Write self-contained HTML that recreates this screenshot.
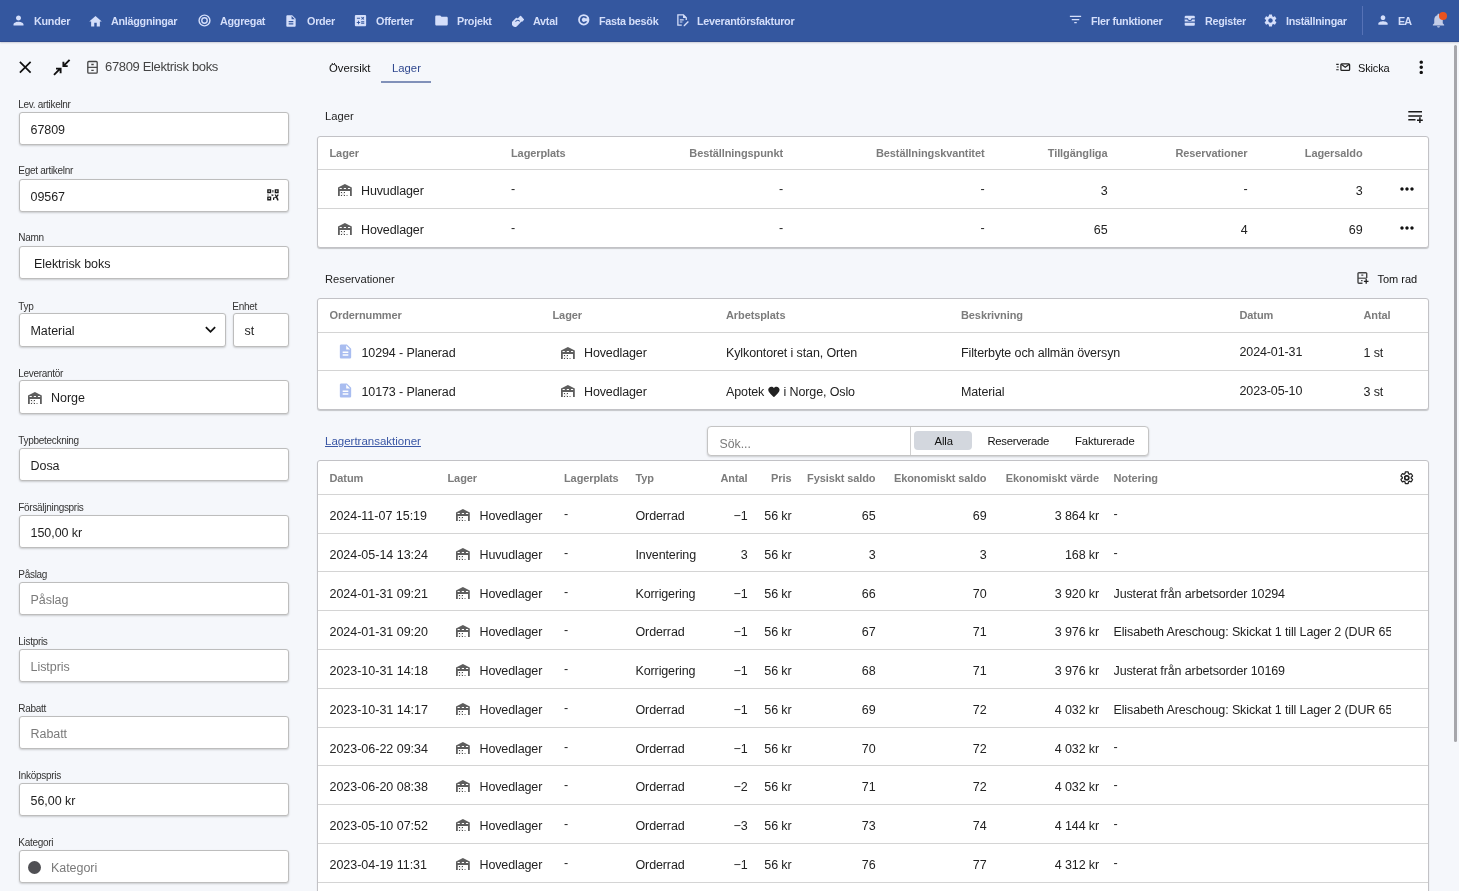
<!DOCTYPE html>
<html><head><meta charset="utf-8">
<style>
*{box-sizing:border-box;margin:0;padding:0}
html,body{width:1459px;height:891px;overflow:hidden;background:#f5f7fb;font-family:"Liberation Sans",sans-serif;color:#222;font-size:13px}
.abs{position:absolute}
#nav{position:absolute;left:0;top:0;width:1459px;height:42px;background:#34579f;box-shadow:inset 0 -1px 0 rgba(45,55,110,.32),0 1px 1.5px rgba(60,60,90,.22)}
#nav .t{position:absolute;top:14px;font-weight:bold;font-size:11.5px;line-height:14px;color:#d4defa;white-space:nowrap;letter-spacing:-.3px;transform:scaleX(.94);transform-origin:0 50%}
#nav svg{position:absolute;fill:#d4defa}
.lbl{position:absolute;left:18.300px;font-size:10px;line-height:12px;color:#333;white-space:nowrap;letter-spacing:-.3px}
.inp{position:absolute;left:19px;width:270px;height:33px;background:#fff;border:1px solid #bdbdbd;border-radius:3px;box-shadow:0 1px 2px rgba(0,0,0,.18);font-size:12.500px;letter-spacing:-.05px;line-height:35px;padding-left:10.500px;white-space:nowrap;color:#1e1e1e}
.inp.ph{color:#7a7a7a}
.card{position:absolute;left:317px;width:1112px;background:#fff;border:1px solid #c2c2c6;border-radius:3px;box-shadow:0 1px 1px rgba(0,0,0,.2);overflow:hidden}
.row{position:absolute;left:0;width:100%;border-top:1px solid #d4d4d4}
.c{position:absolute;white-space:nowrap;font-size:12.5px;letter-spacing:-.12px;line-height:16px;color:#222}
.h{position:absolute;white-space:nowrap;font-size:11px;line-height:14px;font-weight:bold;color:#7c7c7c;letter-spacing:-.1px}
.sec{position:absolute;left:325px;font-size:11.2px;line-height:14px;color:#222;white-space:nowrap}
svg{display:block}
#nav,#left,#main{will-change:transform}
#left,#main{position:absolute;left:0;top:0;width:1459px;height:891px;overflow:hidden}
</style></head><body>
<div id="nav"><svg class="abs" style="left:11px;top:13px;width:15px;height:15px;" viewBox="0 0 24 24"><path d="M12 12c2.21 0 4-1.79 4-4s-1.79-4-4-4-4 1.79-4 4 1.79 4 4 4zm0 2c-2.67 0-8 1.34-8 4v2h16v-2c0-2.66-5.33-4-8-4z"/></svg><span class="t" style="left:34px">Kunder</span><svg class="abs" style="left:88px;top:13.5px;width:15px;height:15px;" viewBox="0 0 24 24"><path d="M10 20v-6h4v6h5v-8h3L12 3 2 12h3v8z"/></svg><span class="t" style="left:111px">Anläggningar</span><svg class="abs" style="left:197.5px;top:14px;width:13px;height:13px" viewBox="0 0 24 24"><circle cx="12" cy="12" r="10" fill="none" stroke="#d4defa" stroke-width="2.6"/><circle cx="12" cy="12" r="5" fill="none" stroke="#d4defa" stroke-width="2.6"/></svg><span class="t" style="left:219.5px">Aggregat</span><svg class="abs" style="left:284px;top:13.5px;width:14px;height:14px;" viewBox="0 0 24 24"><path d="M14 2H6c-1.1 0-1.99.9-1.99 2L4 20c0 1.1.89 2 1.99 2H18c1.1 0 2-.9 2-2V8l-6-6zm2 16H8v-2h8v2zm0-4H8v-2h8v2zm-3-5V3.5L18.5 9H13z"/></svg><span class="t" style="left:306.5px">Order</span><svg class="abs" style="left:353px;top:13px;width:15px;height:15px;" viewBox="0 0 24 24"><path d="M19 3H5c-1.1 0-2 .9-2 2v14c0 1.1.9 2 2 2h14c1.1 0 2-.9 2-2V5c0-1.1-.9-2-2-2zm-5.97 4.06L14.09 6l1.41 1.41L16.91 6l1.06 1.06-1.41 1.41 1.41 1.41-1.06 1.06-1.41-1.4-1.41 1.41-1.06-1.06 1.41-1.41-1.41-1.42zm-6.78.66h5v1.5h-5v-1.5zM11.5 16h-2v2H8v-2H6v-1.5h2v-2h1.5v2h2V16zm6.5 1.25h-5v-1.5h5v1.5zm0-2.5h-5v-1.5h5v1.5z"/></svg><span class="t" style="left:376px">Offerter</span><svg class="abs" style="left:433.5px;top:13px;width:15px;height:15px;" viewBox="0 0 24 24"><path d="M10 4H4c-1.1 0-1.99.9-1.99 2L2 18c0 1.1.9 2 2 2h16c1.1 0 2-.9 2-2V8c0-1.1-.9-2-2-2h-8l-2-2z"/></svg><span class="t" style="left:456.5px">Projekt</span><svg class="abs" style="left:510.5px;top:13.5px;width:13.5px;height:13.5px" viewBox="0 0 24 24"><path d="M3 14.5L9.5 8l3 1.5L17 4.5l5 5.5-2.5 2.5-1-1L11 19.5 8.5 22 5.5 21.5 3 19z" stroke="#d4defa" stroke-width="2.5" stroke-linejoin="round"/><path d="M8 13.5c2.5-3 5-3 7.5-.5" fill="none" stroke="#34579f" stroke-width="1.8"/></svg><span class="t" style="left:532.5px">Avtal</span><svg class="abs" style="left:576.5px;top:13px;width:13.5px;height:13.5px" viewBox="0 0 24 24"><path d="M12 2a10 10 0 100 20 10 10 0 000-20zm0 3.2a6.8 6.8 0 016.3 4.2h-3.7a3.6 3.6 0 100 5.2h3.7A6.8 6.8 0 1112 5.2z" fill-rule="evenodd"/></svg><span class="t" style="left:598.5px">Fasta besök</span><svg class="abs" style="left:673.6px;top:12.4px;width:15.5px;height:16px" viewBox="0 0 24 24"><path d="M5 3h10l5 5v4h-2V9h-4V5H7v14h5v2H5zM9 11h6v1.6H9zm0 3.4h4V16H9zM21.5 13.5l1.5 1.5-6.5 6.5H15V20z"/></svg><span class="t" style="left:697px">Leverantörsfakturor</span><svg class="abs" style="left:1067.6px;top:12.4px;width:15px;height:15px;" viewBox="0 0 24 24"><path d="M10 18h4v-2h-4v2zM3 6v2h18V6H3zm3 7h12v-2H6v2z"/></svg><span class="t" style="left:1091px">Fler funktioner</span><svg class="abs" style="left:1182.5px;top:13.5px;width:13.5px;height:13.5px" viewBox="0 0 24 24"><path d="M3 5a2 2 0 012-2h14a2 2 0 012 2v8.5H3z"/><path d="M3 15.5h18V19a2 2 0 01-2 2H5a2 2 0 01-2-2z"/><path d="M2.500 8.500h5.500c.3 2 1.900 3.300 4 3.300s3.700-1.300 4-3.300h5.500" fill="none" stroke="#34579f" stroke-width="2.200"/></svg><span class="t" style="left:1205px">Register</span><svg class="abs" style="left:1262.5px;top:13px;width:15px;height:15px;" viewBox="0 0 24 24"><path d="M19.14 12.94c.04-.3.06-.61.06-.94 0-.32-.02-.64-.07-.94l2.03-1.58c.18-.14.23-.41.12-.61l-1.92-3.32c-.12-.22-.37-.29-.59-.22l-2.39.96c-.5-.38-1.03-.7-1.62-.94l-.36-2.54c-.04-.24-.24-.41-.48-.41h-3.84c-.24 0-.43.17-.47.41l-.36 2.54c-.59.24-1.13.57-1.62.94l-2.39-.96c-.22-.08-.47 0-.59.22L2.74 8.87c-.12.21-.08.47.12.61l2.03 1.58c-.05.3-.09.63-.09.94s.02.64.07.94l-2.03 1.58c-.18.14-.23.41-.12.61l1.92 3.32c.12.22.37.29.59.22l2.39-.96c.5.38 1.03.7 1.62.94l.36 2.54c.05.24.24.41.48.41h3.84c.24 0 .44-.17.47-.41l.36-2.54c.59-.24 1.13-.56 1.62-.94l2.39.96c.22.08.47 0 .59-.22l1.92-3.32c.12-.22.07-.47-.12-.61l-2.01-1.58zM12 15.6c-1.98 0-3.6-1.62-3.6-3.6s1.62-3.6 3.6-3.6 3.6 1.62 3.6 3.6-1.62 3.6-3.6 3.6z"/></svg><span class="t" style="left:1286px">Inställningar</span><div class="abs" style="left:1362px;top:6px;width:1px;height:29px;background:#5672b6"></div><svg class="abs" style="left:1376px;top:13px;width:14px;height:14px;" viewBox="0 0 24 24"><path d="M12 12c2.21 0 4-1.79 4-4s-1.79-4-4-4-4 1.79-4 4 1.79 4 4 4zm0 2c-2.67 0-8 1.34-8 4v2h16v-2c0-2.66-5.33-4-8-4z"/></svg><span class="t" style="left:1398px;letter-spacing:-.9px">EA</span><svg class="abs" style="left:1429.9px;top:12.4px;width:17px;height:17px;fill:#c3cde8;" viewBox="0 0 24 24"><path d="M12 22c1.1 0 2-.9 2-2h-4c0 1.1.89 2 2 2zm6-6v-5c0-3.07-1.64-5.64-4.5-6.32V4c0-.83-.67-1.5-1.5-1.5s-1.5.67-1.5 1.5v.68C7.63 5.36 6 7.92 6 11v5l-2 2v1h16v-1l-2-2z"/></svg><div class="abs" style="left:1439px;top:12.2px;width:8.2px;height:8.2px;border-radius:50%;background:#e9531f"></div></div>
<div id="left"><svg class="abs" style="left:15.3px;top:57px;width:20.5px;height:20.5px;fill:#111;" viewBox="0 0 24 24"><path d="M19 6.41L17.59 5 12 10.59 6.41 5 5 6.41 10.59 12 5 17.59 6.41 19 12 13.41 17.59 19 19 17.59 13.41 12z"/></svg><svg class="abs" style="left:52px;top:58px;width:20px;height:20px" viewBox="0 0 20 20" fill="none" stroke="#111" stroke-width="1.9"><path d="M17.6 1.9L11.6 7.9M11.4 3.8V8.1H15.7M2 16.8L8.4 10.4M4 10.6H8.6V15.2"/></svg><svg class="abs" style="left:86.3px;top:60px;width:13px;height:15px" viewBox="0 0 13 15"><rect x="1.8" y="1.5" width="9.4" height="11.7" rx="1" fill="none" stroke="#444" stroke-width="1.3"/><path d="M1.8 7.35h9.4" stroke="#444" stroke-width="1.2"/><path d="M5.3 4.5h2.4M5.3 10.4h2.4" stroke="#444" stroke-width="1.3"/></svg><span class="abs" style="left:105px;top:59px;font-size:13px;line-height:16px;color:#444;white-space:nowrap;letter-spacing:-.35px">67809 Elektrisk boks</span><span class="lbl" style="top:98.5px">Lev. artikelnr</span><div class="inp" style="top:112px;">67809</div><span class="lbl" style="top:164.9px">Eget artikelnr</span><div class="inp" style="top:179px;">09567</div><svg class="abs" style="left:266.5px;top:188.7px;width:12px;height:12px" viewBox="0 0 12 12" fill="#1a1a1a"><path d="M.2.2h4v4h-4zm1.35 1.35v1.3h1.3v-1.3zM7.7.2h4v4h-4zm1.35 1.35v1.3h1.3v-1.3zM.2 7.4h4v4h-4zm1.35 1.35v1.3h1.3v-1.3z" fill-rule="evenodd"/><path d="M5.4.9h1v2.700h-1zM.5 5.400h1v1h-1zM4.300 5.400h2v1.500h-1v-.5h-1zM7.600 5.400h1.200l2.600 4.600v1.400h-1.200zM10.400 5.400h1.100v1.200l-2 2.200-2.300.5v1.800h-1.200v-2.500l2.800-.6z"/></svg><span class="lbl" style="top:231.9px">Namn</span><div class="inp" style="top:246px;padding-left:14px;">Elektrisk boks</div><span class="lbl" style="top:300.5px">Typ</span><div class="inp" style="top:313px;height:34px;line-height:34.5px;width:207px">Material</div><svg class="abs" style="left:199.8px;top:318.8px;width:21px;height:21px;fill:#111;" viewBox="0 0 24 24"><path d="M7.41 8.59L12 13.17l4.59-4.58L18 10l-6 6-6-6 1.41-1.41z"/></svg><span class="lbl" style="top:300.5px;left:232.3px">Enhet</span><div class="inp" style="top:313px;height:34px;line-height:34.5px;left:233px;width:56px">st</div><span class="lbl" style="top:367.5px">Leverantör</span><div class="inp" style="top:381px;padding-left:31px;top:380px;height:34px;line-height:35.5px;">Norge</div><svg class="abs" style="left:27.70px;top:391.80px;width:14px;height:12px" viewBox="0 0 14 12"><path d="M0 3.500L6.900 0 13.800 3.500V6.900H12V12H13.800V6.900 12H12V6.900H1.800V12H0z" fill="#5e5e5e"/><path d="M12 6.900h1.800V12H12z" fill="#5e5e5e"/><path d="M1.600 4.100h2.200v.9H1.600zM5.800 4.100H8v.9H5.800zM9.950 4.100h2.200v.9h-2.200z" fill="#fff"/><rect x="3.200" y="8.300" width="3.600" height="3.400" fill="#888" opacity=".18"/><path d="M2.900 8h1v1h-1zM5.900 8h1v1h-1zM2.900 10.900h1v1h-1zM5.900 10.900h1v1h-1z" fill="#333"/><path d="M8.200 11.100h1.700v.7H8.200z" fill="#888"/></svg><span class="lbl" style="top:434.5px">Typbeteckning</span><div class="inp" style="top:448px;">Dosa</div><span class="lbl" style="top:501.5px">Försäljningspris</span><div class="inp" style="top:515px;">150,00 kr</div><span class="lbl" style="top:568.5px">Påslag</span><div class="inp ph" style="top:582px;">Påslag</div><span class="lbl" style="top:635.5px">Listpris</span><div class="inp ph" style="top:649px;">Listpris</div><span class="lbl" style="top:702.5px">Rabatt</span><div class="inp ph" style="top:716px;">Rabatt</div><span class="lbl" style="top:769.5px">Inköpspris</span><div class="inp" style="top:783px;">56,00 kr</div><span class="lbl" style="top:836.5px">Kategori</span><div class="inp ph" style="top:850px;padding-left:31px;">Kategori</div><div class="abs" style="left:28px;top:860.5px;width:13px;height:13px;border-radius:50%;background:#505054"></div></div>
<div id="main"><span class="abs" style="left:329px;top:61px;font-size:11.3px;line-height:14px;color:#111">Översikt</span><span class="abs" style="left:392px;top:61px;font-size:11.3px;line-height:14px;color:#30488f">Lager</span><div class="abs" style="left:381px;top:81px;width:50px;height:2px;background:rgba(52,76,142,.6)"></div><svg class="abs" style="left:1335px;top:62px;width:16px;height:10px" viewBox="0 0 16 10" fill="none" stroke="#222"><rect x="5.9" y="1.8" width="8.7" height="6.5" rx=".9" stroke-width="1.3"/><path d="M6.2 2.3l4.05 3 4.05-3" stroke-width="1.2"/><path d="M1.2 2.4h2.5M1.8 5h1.9M1.2 7.7h2.5" stroke-width="1.1"/></svg><span class="abs" style="left:1358px;top:61px;font-size:11px;line-height:14px;color:#111;letter-spacing:-.15px">Skicka</span><svg class="abs" style="left:1411.25px;top:57.35px;width:20.5px;height:20.5px;fill:#111;" viewBox="0 0 24 24"><path d="M12 8c1.1 0 2-.9 2-2s-.9-2-2-2-2 .9-2 2 .9 2 2 2zm0 2c-1.1 0-2 .9-2 2s.9 2 2 2 2-.9 2-2-.9-2-2-2zm0 6c-1.1 0-2 .9-2 2s.9 2 2 2 2-.9 2-2-.9-2-2-2z"/></svg><span class="sec" style="top:109px">Lager</span><svg class="abs" style="left:1405px;top:108px;width:20px;height:18px" viewBox="0 0 20 18" fill="none" stroke="#1a1a1a" stroke-width="1.500"><path d="M3.300 3.700H17M3.300 8.100H17M3.300 11.800H10.500M14.900 9.200V15.100M12 12.150H17.800"/></svg><div class="card" style="top:136px;height:112px"><span class="h" style="left:11.5px;top:8.6px;">Lager</span><span class="h" style="left:193px;top:8.6px;">Lagerplats</span><span class="h" style="right:645px;top:8.6px;">Beställningspunkt</span><span class="h" style="right:443.5px;top:8.6px;">Beställningskvantitet</span><span class="h" style="right:320.5px;top:8.6px;">Tillgängliga</span><span class="h" style="right:180.5px;top:8.6px;">Reservationer</span><span class="h" style="right:65.5px;top:8.6px;">Lagersaldo</span><div class="row" style="top:32.0px;height:40px"></div><svg class="abs" style="left:20.10px;top:47.00px;width:14px;height:12px" viewBox="0 0 14 12"><path d="M0 3.500L6.900 0 13.800 3.500V6.900H12V12H13.800V6.900 12H12V6.900H1.800V12H0z" fill="#5e5e5e"/><path d="M12 6.900h1.800V12H12z" fill="#5e5e5e"/><path d="M1.600 4.100h2.200v.9H1.600zM5.800 4.100H8v.9H5.800zM9.950 4.100h2.200v.9h-2.200z" fill="#fff"/><rect x="3.200" y="8.300" width="3.600" height="3.400" fill="#888" opacity=".18"/><path d="M2.900 8h1v1h-1zM5.900 8h1v1h-1zM2.900 10.900h1v1h-1zM5.900 10.900h1v1h-1z" fill="#333"/><path d="M8.200 11.100h1.700v.7H8.200z" fill="#888"/></svg><span class="c" style="left:43px;top:45.5px;">Huvudlager</span><span class="c" style="left:193px;top:43.5px;">-</span><span class="c" style="right:645px;top:43.5px;">-</span><span class="c" style="right:443.5px;top:43.5px;">-</span><span class="c" style="right:320.5px;top:45.5px;">3</span><span class="c" style="right:180.5px;top:43.5px;">-</span><span class="c" style="right:65.5px;top:45.5px;">3</span><svg class="abs" style="left:1079px;top:42.0px;width:20px;height:20px;fill:#111;" viewBox="0 0 24 24"><path d="M6 10c-1.1 0-2 .9-2 2s.9 2 2 2 2-.9 2-2-.9-2-2-2zm12 0c-1.1 0-2 .9-2 2s.9 2 2 2 2-.9 2-2-.9-2-2-2zm-6 0c-1.1 0-2 .9-2 2s.9 2 2 2 2-.9 2-2-.9-2-2-2z"/></svg><div class="row" style="top:71.2px;height:40px"></div><svg class="abs" style="left:20.10px;top:86.20px;width:14px;height:12px" viewBox="0 0 14 12"><path d="M0 3.500L6.900 0 13.800 3.500V6.900H12V12H13.800V6.900 12H12V6.900H1.800V12H0z" fill="#5e5e5e"/><path d="M12 6.900h1.800V12H12z" fill="#5e5e5e"/><path d="M1.600 4.100h2.200v.9H1.600zM5.800 4.100H8v.9H5.800zM9.950 4.100h2.200v.9h-2.200z" fill="#fff"/><rect x="3.200" y="8.300" width="3.600" height="3.400" fill="#888" opacity=".18"/><path d="M2.900 8h1v1h-1zM5.900 8h1v1h-1zM2.900 10.900h1v1h-1zM5.900 10.900h1v1h-1z" fill="#333"/><path d="M8.200 11.100h1.700v.7H8.200z" fill="#888"/></svg><span class="c" style="left:43px;top:84.7px;">Hovedlager</span><span class="c" style="left:193px;top:82.7px;">-</span><span class="c" style="right:645px;top:82.7px;">-</span><span class="c" style="right:443.5px;top:82.7px;">-</span><span class="c" style="right:320.5px;top:84.7px;">65</span><span class="c" style="right:180.5px;top:84.7px;">4</span><span class="c" style="right:65.5px;top:84.7px;">69</span><svg class="abs" style="left:1079px;top:81.2px;width:20px;height:20px;fill:#111;" viewBox="0 0 24 24"><path d="M6 10c-1.1 0-2 .9-2 2s.9 2 2 2 2-.9 2-2-.9-2-2-2zm12 0c-1.1 0-2 .9-2 2s.9 2 2 2 2-.9 2-2-.9-2-2-2zm-6 0c-1.1 0-2 .9-2 2s.9 2 2 2 2-.9 2-2-.9-2-2-2z"/></svg></div><span class="sec" style="top:272px">Reservationer</span><svg class="abs" style="left:1356px;top:271px;width:14px;height:14px" viewBox="0 0 14 14" fill="none" stroke="#444"><path d="M10.700 7V2.600a.9.900 0 00-.9-.9H2.900a.9.900 0 00-.9.900v8.700a.9.900 0 00.900.900H6.500" stroke-width="1.400"/><path d="M2 7.200H10.700" stroke-width="1.200"/><path d="M5.300 4.200H7.300M5 9.700H6.600" stroke-width="1.200"/><path d="M10.200 8.100V12.700M7.900 10.400H12.500" stroke="#222" stroke-width="1.300"/></svg><span class="abs" style="left:1377.500px;top:272px;font-size:11px;line-height:14px;color:#111;letter-spacing:0">Tom rad</span><div class="card" style="top:298px;height:111.5px"><span class="h" style="left:11.5px;top:9px;">Ordernummer</span><span class="h" style="left:234.5px;top:9px;">Lager</span><span class="h" style="left:408px;top:9px;">Arbetsplats</span><span class="h" style="left:643px;top:9px;">Beskrivning</span><span class="h" style="left:921.5px;top:9px;">Datum</span><span class="h" style="left:1045.5px;top:9px;">Antal</span><div class="row" style="top:33.0px;height:40px"></div><svg class="abs" style="left:18.5px;top:43.8px;width:17px;height:17px;fill:#a9bdf0;" viewBox="0 0 24 24"><path d="M14 2H6c-1.1 0-1.99.9-1.99 2L4 20c0 1.1.89 2 1.99 2H18c1.1 0 2-.9 2-2V8l-6-6zm2 16H8v-2h8v2zm0-4H8v-2h8v2zm-3-5V3.5L18.5 9H13z"/></svg><span class="c" style="left:43.5px;top:45.5px;">10294 - Planerad</span><svg class="abs" style="left:243.10px;top:47.50px;width:14px;height:12px" viewBox="0 0 14 12"><path d="M0 3.500L6.900 0 13.800 3.500V6.900H12V12H13.800V6.900 12H12V6.900H1.800V12H0z" fill="#5e5e5e"/><path d="M12 6.900h1.800V12H12z" fill="#5e5e5e"/><path d="M1.600 4.100h2.200v.9H1.600zM5.800 4.100H8v.9H5.800zM9.950 4.100h2.200v.9h-2.200z" fill="#fff"/><rect x="3.200" y="8.300" width="3.600" height="3.400" fill="#888" opacity=".18"/><path d="M2.900 8h1v1h-1zM5.900 8h1v1h-1zM2.900 10.900h1v1h-1zM5.900 10.900h1v1h-1z" fill="#333"/><path d="M8.200 11.100h1.700v.7H8.200z" fill="#888"/></svg><span class="c" style="left:266px;top:45.5px;">Hovedlager</span><span class="c" style="left:408px;top:45.5px;">Kylkontoret i stan, Orten</span><span class="c" style="left:643px;top:45.5px;">Filterbyte och allmän översyn</span><span class="c" style="left:921.5px;top:44.5px;">2024-01-31</span><span class="c" style="left:1045.5px;top:45.5px;">1 st</span><div class="row" style="top:71.2px;height:40px"></div><svg class="abs" style="left:18.5px;top:83.2px;width:17px;height:17px;fill:#a9bdf0;" viewBox="0 0 24 24"><path d="M14 2H6c-1.1 0-1.99.9-1.99 2L4 20c0 1.1.89 2 1.99 2H18c1.1 0 2-.9 2-2V8l-6-6zm2 16H8v-2h8v2zm0-4H8v-2h8v2zm-3-5V3.5L18.5 9H13z"/></svg><span class="c" style="left:43.5px;top:84.7px;">10173 - Planerad</span><svg class="abs" style="left:243.10px;top:85.70px;width:14px;height:12px" viewBox="0 0 14 12"><path d="M0 3.500L6.900 0 13.800 3.500V6.900H12V12H13.800V6.900 12H12V6.900H1.800V12H0z" fill="#5e5e5e"/><path d="M12 6.900h1.800V12H12z" fill="#5e5e5e"/><path d="M1.600 4.100h2.200v.9H1.600zM5.800 4.100H8v.9H5.800zM9.950 4.100h2.200v.9h-2.200z" fill="#fff"/><rect x="3.200" y="8.300" width="3.600" height="3.400" fill="#888" opacity=".18"/><path d="M2.900 8h1v1h-1zM5.900 8h1v1h-1zM2.900 10.900h1v1h-1zM5.900 10.900h1v1h-1z" fill="#333"/><path d="M8.200 11.100h1.700v.7H8.200z" fill="#888"/></svg><span class="c" style="left:266px;top:84.7px;">Hovedlager</span><span class="c" style="left:408px;top:84.7px;">Apotek <svg style="display:inline-block;width:13.800px;height:12.500px;vertical-align:-1.500px;margin:0 -.6px" viewBox="0 0 24 22"><path d="M12 21.350l-1.450-1.320C5.400 15.360 2 12.280 2 8.500 2 5.420 4.420 3 7.500 3c1.740 0 3.410.81 4.500 2.090C13.090 3.810 14.760 3 16.500 3 19.580 3 22 5.420 22 8.500c0 3.780-3.400 6.860-8.550 11.540L12 21.350z" fill="#222"/></svg> i Norge, Oslo</span><span class="c" style="left:643px;top:84.7px;">Material</span><span class="c" style="left:921.5px;top:83.7px;">2023-05-10</span><span class="c" style="left:1045.5px;top:84.7px;">3 st</span></div><span class="abs" style="left:325px;top:434px;font-size:11.500px;line-height:14px;color:#3a57a5;text-decoration:underline;white-space:nowrap">Lagertransaktioner</span><div class="abs" style="left:707px;top:426px;width:441.500px;height:29.500px;background:#fff;border:1px solid #c4c4c4;border-radius:4px;box-shadow:0 1px 2px rgba(0,0,0,.18)"></div><div class="abs" style="left:910px;top:427px;width:1px;height:28px;background:#d0d0d0"></div><span class="abs" style="left:719.500px;top:436px;font-size:12.300px;line-height:16px;color:#7a7a7a">Sök...</span><div class="abs" style="left:914px;top:431px;width:58px;height:19px;border-radius:4px;background:#d3d7de"></div><span class="abs" style="left:934.5px;top:434px;font-size:11.300px;line-height:14px;color:#111;white-space:nowrap;letter-spacing:-0.12px">Alla</span><span class="abs" style="left:987.5px;top:434px;font-size:11.300px;line-height:14px;color:#111;white-space:nowrap;letter-spacing:-0.3px">Reserverade</span><span class="abs" style="left:1075px;top:434px;font-size:11.300px;line-height:14px;color:#111;white-space:nowrap;letter-spacing:-0.12px">Fakturerade</span><div class="card" style="top:460px;height:460px"><span class="h" style="left:11.5px;top:10px;">Datum</span><span class="h" style="left:129.5px;top:10px;">Lager</span><span class="h" style="left:246px;top:10px;">Lagerplats</span><span class="h" style="left:317.5px;top:10px;">Typ</span><span class="h" style="right:680.5px;top:10px;">Antal</span><span class="h" style="right:636.5px;top:10px;">Pris</span><span class="h" style="right:552.5px;top:10px;">Fysiskt saldo</span><span class="h" style="right:441.5px;top:10px;">Ekonomiskt saldo</span><span class="h" style="right:329px;top:10px;">Ekonomiskt värde</span><span class="h" style="left:795.5px;top:10px;">Notering</span><svg class="abs" style="left:1080px;top:8px;width:17.500px;height:17.500px" viewBox="0 0 24 24"><path d="M19.14 12.94c.04-.3.06-.61.06-.94 0-.32-.02-.64-.07-.94l2.03-1.58c.18-.14.23-.41.12-.61l-1.92-3.32c-.12-.22-.37-.29-.59-.22l-2.39.96c-.5-.38-1.03-.7-1.62-.94l-.36-2.54c-.04-.24-.24-.41-.48-.41h-3.84c-.24 0-.43.17-.47.41l-.36 2.54c-.59.24-1.13.57-1.62.94l-2.39-.96c-.22-.08-.47 0-.59.22L2.74 8.87c-.12.21-.08.47.12.61l2.03 1.58c-.05.3-.09.63-.09.94s.02.64.07.94l-2.03 1.58c-.18.14-.23.41-.12.61l1.92 3.32c.12.22.37.29.59.22l2.39-.96c.5.38 1.03.7 1.62.94l.36 2.54c.05.24.24.41.48.41h3.84c.24 0 .44-.17.47-.41l.36-2.54c.59-.24 1.13-.56 1.62-.94l2.39.96c.22.08.47 0 .59-.22l1.92-3.32c.12-.22.07-.47-.12-.61l-2.01-1.58zM12 15.6c-1.98 0-3.6-1.62-3.6-3.6s1.62-3.6 3.6-3.6 3.6 1.62 3.6 3.6-1.62 3.6-3.6 3.6z" fill="none" stroke="#222" stroke-width="2" transform="translate(1.800 1.800) scale(.85)"/><circle cx="12" cy="12" r="2.600" fill="none" stroke="#222" stroke-width="1.800"/></svg><div class="row" style="top:32.9px;height:40px"></div><span class="c" style="left:11.5px;top:47px;letter-spacing:-.02px">2024-11-07 15:19</span><svg class="abs" style="left:137.70px;top:47.90px;width:14px;height:12px" viewBox="0 0 14 12"><path d="M0 3.500L6.900 0 13.800 3.500V6.900H12V12H13.800V6.900 12H12V6.900H1.800V12H0z" fill="#5e5e5e"/><path d="M12 6.900h1.800V12H12z" fill="#5e5e5e"/><path d="M1.600 4.100h2.200v.9H1.600zM5.800 4.100H8v.9H5.800zM9.950 4.100h2.200v.9h-2.200z" fill="#fff"/><rect x="3.200" y="8.300" width="3.600" height="3.400" fill="#888" opacity=".18"/><path d="M2.900 8h1v1h-1zM5.900 8h1v1h-1zM2.900 10.900h1v1h-1zM5.900 10.900h1v1h-1z" fill="#333"/><path d="M8.200 11.100h1.700v.7H8.200z" fill="#888"/></svg><span class="c" style="left:161.5px;top:47px;">Hovedlager</span><span class="c" style="left:246px;top:45px;">-</span><span class="c" style="left:317.5px;top:47px;">Orderrad</span><span class="c" style="right:680.5px;top:47px;">−1</span><span class="c" style="right:636.5px;top:47px;">56 kr</span><span class="c" style="right:552.5px;top:47px;">65</span><span class="c" style="right:441.5px;top:47px;">69</span><span class="c" style="right:329px;top:47px;">3 864 kr</span><span class="c" style="left:795.5px;top:45px;">-</span><div class="row" style="top:71.69px;height:40px"></div><span class="c" style="left:11.5px;top:86px;letter-spacing:-.02px">2024-05-14 13:24</span><svg class="abs" style="left:137.70px;top:86.90px;width:14px;height:12px" viewBox="0 0 14 12"><path d="M0 3.500L6.900 0 13.800 3.500V6.900H12V12H13.800V6.900 12H12V6.900H1.800V12H0z" fill="#5e5e5e"/><path d="M12 6.900h1.800V12H12z" fill="#5e5e5e"/><path d="M1.600 4.100h2.200v.9H1.600zM5.800 4.100H8v.9H5.800zM9.950 4.100h2.200v.9h-2.200z" fill="#fff"/><rect x="3.200" y="8.300" width="3.600" height="3.400" fill="#888" opacity=".18"/><path d="M2.900 8h1v1h-1zM5.900 8h1v1h-1zM2.900 10.900h1v1h-1zM5.900 10.900h1v1h-1z" fill="#333"/><path d="M8.200 11.100h1.700v.7H8.200z" fill="#888"/></svg><span class="c" style="left:161.5px;top:86px;">Huvudlager</span><span class="c" style="left:246px;top:84px;">-</span><span class="c" style="left:317.5px;top:86px;">Inventering</span><span class="c" style="right:680.5px;top:86px;">3</span><span class="c" style="right:636.5px;top:86px;">56 kr</span><span class="c" style="right:552.5px;top:86px;">3</span><span class="c" style="right:441.5px;top:86px;">3</span><span class="c" style="right:329px;top:86px;">168 kr</span><span class="c" style="left:795.5px;top:84px;">-</span><div class="row" style="top:110.47999999999999px;height:40px"></div><span class="c" style="left:11.5px;top:125px;letter-spacing:-.02px">2024-01-31 09:21</span><svg class="abs" style="left:137.70px;top:125.90px;width:14px;height:12px" viewBox="0 0 14 12"><path d="M0 3.500L6.900 0 13.800 3.500V6.900H12V12H13.800V6.900 12H12V6.900H1.800V12H0z" fill="#5e5e5e"/><path d="M12 6.900h1.800V12H12z" fill="#5e5e5e"/><path d="M1.600 4.100h2.200v.9H1.600zM5.800 4.100H8v.9H5.800zM9.950 4.100h2.200v.9h-2.200z" fill="#fff"/><rect x="3.200" y="8.300" width="3.600" height="3.400" fill="#888" opacity=".18"/><path d="M2.900 8h1v1h-1zM5.900 8h1v1h-1zM2.900 10.900h1v1h-1zM5.900 10.900h1v1h-1z" fill="#333"/><path d="M8.200 11.100h1.700v.7H8.200z" fill="#888"/></svg><span class="c" style="left:161.5px;top:125px;">Hovedlager</span><span class="c" style="left:246px;top:123px;">-</span><span class="c" style="left:317.5px;top:125px;">Korrigering</span><span class="c" style="right:680.5px;top:125px;">−1</span><span class="c" style="right:636.5px;top:125px;">56 kr</span><span class="c" style="right:552.5px;top:125px;">66</span><span class="c" style="right:441.5px;top:125px;">70</span><span class="c" style="right:329px;top:125px;">3 920 kr</span><span class="c" style="left:795.5px;top:125px;width:277px;overflow:hidden">Justerat från arbetsorder 10294</span><div class="row" style="top:149.27px;height:40px"></div><span class="c" style="left:11.5px;top:163px;letter-spacing:-.02px">2024-01-31 09:20</span><svg class="abs" style="left:137.70px;top:163.90px;width:14px;height:12px" viewBox="0 0 14 12"><path d="M0 3.500L6.900 0 13.800 3.500V6.900H12V12H13.800V6.900 12H12V6.900H1.800V12H0z" fill="#5e5e5e"/><path d="M12 6.900h1.800V12H12z" fill="#5e5e5e"/><path d="M1.600 4.100h2.200v.9H1.600zM5.800 4.100H8v.9H5.800zM9.950 4.100h2.200v.9h-2.200z" fill="#fff"/><rect x="3.200" y="8.300" width="3.600" height="3.400" fill="#888" opacity=".18"/><path d="M2.900 8h1v1h-1zM5.900 8h1v1h-1zM2.900 10.900h1v1h-1zM5.900 10.900h1v1h-1z" fill="#333"/><path d="M8.200 11.100h1.700v.7H8.200z" fill="#888"/></svg><span class="c" style="left:161.5px;top:163px;">Hovedlager</span><span class="c" style="left:246px;top:161px;">-</span><span class="c" style="left:317.5px;top:163px;">Orderrad</span><span class="c" style="right:680.5px;top:163px;">−1</span><span class="c" style="right:636.5px;top:163px;">56 kr</span><span class="c" style="right:552.5px;top:163px;">67</span><span class="c" style="right:441.5px;top:163px;">71</span><span class="c" style="right:329px;top:163px;">3 976 kr</span><span class="c" style="left:795.5px;top:163px;width:277px;overflow:hidden">Elisabeth Areschoug: Skickat 1 till Lager 2 (DUR 6567)</span><div class="row" style="top:188.06px;height:40px"></div><span class="c" style="left:11.5px;top:202px;letter-spacing:-.02px">2023-10-31 14:18</span><svg class="abs" style="left:137.70px;top:202.90px;width:14px;height:12px" viewBox="0 0 14 12"><path d="M0 3.500L6.900 0 13.800 3.500V6.900H12V12H13.800V6.900 12H12V6.900H1.800V12H0z" fill="#5e5e5e"/><path d="M12 6.900h1.800V12H12z" fill="#5e5e5e"/><path d="M1.600 4.100h2.200v.9H1.600zM5.800 4.100H8v.9H5.800zM9.950 4.100h2.200v.9h-2.200z" fill="#fff"/><rect x="3.200" y="8.300" width="3.600" height="3.400" fill="#888" opacity=".18"/><path d="M2.900 8h1v1h-1zM5.900 8h1v1h-1zM2.900 10.900h1v1h-1zM5.900 10.900h1v1h-1z" fill="#333"/><path d="M8.200 11.100h1.700v.7H8.200z" fill="#888"/></svg><span class="c" style="left:161.5px;top:202px;">Hovedlager</span><span class="c" style="left:246px;top:200px;">-</span><span class="c" style="left:317.5px;top:202px;">Korrigering</span><span class="c" style="right:680.5px;top:202px;">−1</span><span class="c" style="right:636.5px;top:202px;">56 kr</span><span class="c" style="right:552.5px;top:202px;">68</span><span class="c" style="right:441.5px;top:202px;">71</span><span class="c" style="right:329px;top:202px;">3 976 kr</span><span class="c" style="left:795.5px;top:202px;width:277px;overflow:hidden">Justerat från arbetsorder 10169</span><div class="row" style="top:226.85px;height:40px"></div><span class="c" style="left:11.5px;top:241px;letter-spacing:-.02px">2023-10-31 14:17</span><svg class="abs" style="left:137.70px;top:241.90px;width:14px;height:12px" viewBox="0 0 14 12"><path d="M0 3.500L6.900 0 13.800 3.500V6.900H12V12H13.800V6.900 12H12V6.900H1.800V12H0z" fill="#5e5e5e"/><path d="M12 6.900h1.800V12H12z" fill="#5e5e5e"/><path d="M1.600 4.100h2.200v.9H1.600zM5.800 4.100H8v.9H5.800zM9.950 4.100h2.200v.9h-2.200z" fill="#fff"/><rect x="3.200" y="8.300" width="3.600" height="3.400" fill="#888" opacity=".18"/><path d="M2.900 8h1v1h-1zM5.900 8h1v1h-1zM2.900 10.900h1v1h-1zM5.900 10.900h1v1h-1z" fill="#333"/><path d="M8.200 11.100h1.700v.7H8.200z" fill="#888"/></svg><span class="c" style="left:161.5px;top:241px;">Hovedlager</span><span class="c" style="left:246px;top:239px;">-</span><span class="c" style="left:317.5px;top:241px;">Orderrad</span><span class="c" style="right:680.5px;top:241px;">−1</span><span class="c" style="right:636.5px;top:241px;">56 kr</span><span class="c" style="right:552.5px;top:241px;">69</span><span class="c" style="right:441.5px;top:241px;">72</span><span class="c" style="right:329px;top:241px;">4 032 kr</span><span class="c" style="left:795.5px;top:241px;width:277px;overflow:hidden">Elisabeth Areschoug: Skickat 1 till Lager 2 (DUR 6567)</span><div class="row" style="top:265.64px;height:40px"></div><span class="c" style="left:11.5px;top:280px;letter-spacing:-.02px">2023-06-22 09:34</span><svg class="abs" style="left:137.70px;top:280.90px;width:14px;height:12px" viewBox="0 0 14 12"><path d="M0 3.500L6.900 0 13.800 3.500V6.900H12V12H13.800V6.900 12H12V6.900H1.800V12H0z" fill="#5e5e5e"/><path d="M12 6.900h1.800V12H12z" fill="#5e5e5e"/><path d="M1.600 4.100h2.200v.9H1.600zM5.800 4.100H8v.9H5.800zM9.950 4.100h2.200v.9h-2.200z" fill="#fff"/><rect x="3.200" y="8.300" width="3.600" height="3.400" fill="#888" opacity=".18"/><path d="M2.900 8h1v1h-1zM5.900 8h1v1h-1zM2.900 10.900h1v1h-1zM5.900 10.900h1v1h-1z" fill="#333"/><path d="M8.200 11.100h1.700v.7H8.200z" fill="#888"/></svg><span class="c" style="left:161.5px;top:280px;">Hovedlager</span><span class="c" style="left:246px;top:278px;">-</span><span class="c" style="left:317.5px;top:280px;">Orderrad</span><span class="c" style="right:680.5px;top:280px;">−1</span><span class="c" style="right:636.5px;top:280px;">56 kr</span><span class="c" style="right:552.5px;top:280px;">70</span><span class="c" style="right:441.5px;top:280px;">72</span><span class="c" style="right:329px;top:280px;">4 032 kr</span><span class="c" style="left:795.5px;top:278px;">-</span><div class="row" style="top:304.42999999999995px;height:40px"></div><span class="c" style="left:11.5px;top:318px;letter-spacing:-.02px">2023-06-20 08:38</span><svg class="abs" style="left:137.70px;top:318.90px;width:14px;height:12px" viewBox="0 0 14 12"><path d="M0 3.500L6.900 0 13.800 3.500V6.900H12V12H13.800V6.900 12H12V6.900H1.800V12H0z" fill="#5e5e5e"/><path d="M12 6.900h1.800V12H12z" fill="#5e5e5e"/><path d="M1.600 4.100h2.200v.9H1.600zM5.800 4.100H8v.9H5.800zM9.950 4.100h2.200v.9h-2.200z" fill="#fff"/><rect x="3.200" y="8.300" width="3.600" height="3.400" fill="#888" opacity=".18"/><path d="M2.900 8h1v1h-1zM5.900 8h1v1h-1zM2.900 10.900h1v1h-1zM5.900 10.900h1v1h-1z" fill="#333"/><path d="M8.200 11.100h1.700v.7H8.200z" fill="#888"/></svg><span class="c" style="left:161.5px;top:318px;">Hovedlager</span><span class="c" style="left:246px;top:316px;">-</span><span class="c" style="left:317.5px;top:318px;">Orderrad</span><span class="c" style="right:680.5px;top:318px;">−2</span><span class="c" style="right:636.5px;top:318px;">56 kr</span><span class="c" style="right:552.5px;top:318px;">71</span><span class="c" style="right:441.5px;top:318px;">72</span><span class="c" style="right:329px;top:318px;">4 032 kr</span><span class="c" style="left:795.5px;top:316px;">-</span><div class="row" style="top:343.21999999999997px;height:40px"></div><span class="c" style="left:11.5px;top:357px;letter-spacing:-.02px">2023-05-10 07:52</span><svg class="abs" style="left:137.70px;top:357.90px;width:14px;height:12px" viewBox="0 0 14 12"><path d="M0 3.500L6.900 0 13.800 3.500V6.900H12V12H13.800V6.900 12H12V6.900H1.800V12H0z" fill="#5e5e5e"/><path d="M12 6.900h1.800V12H12z" fill="#5e5e5e"/><path d="M1.600 4.100h2.200v.9H1.600zM5.800 4.100H8v.9H5.800zM9.950 4.100h2.200v.9h-2.200z" fill="#fff"/><rect x="3.200" y="8.300" width="3.600" height="3.400" fill="#888" opacity=".18"/><path d="M2.900 8h1v1h-1zM5.900 8h1v1h-1zM2.900 10.900h1v1h-1zM5.900 10.900h1v1h-1z" fill="#333"/><path d="M8.200 11.100h1.700v.7H8.200z" fill="#888"/></svg><span class="c" style="left:161.5px;top:357px;">Hovedlager</span><span class="c" style="left:246px;top:355px;">-</span><span class="c" style="left:317.5px;top:357px;">Orderrad</span><span class="c" style="right:680.5px;top:357px;">−3</span><span class="c" style="right:636.5px;top:357px;">56 kr</span><span class="c" style="right:552.5px;top:357px;">73</span><span class="c" style="right:441.5px;top:357px;">74</span><span class="c" style="right:329px;top:357px;">4 144 kr</span><span class="c" style="left:795.5px;top:355px;">-</span><div class="row" style="top:382.01px;height:40px"></div><span class="c" style="left:11.5px;top:396px;letter-spacing:-.02px">2023-04-19 11:31</span><svg class="abs" style="left:137.70px;top:396.90px;width:14px;height:12px" viewBox="0 0 14 12"><path d="M0 3.500L6.900 0 13.800 3.500V6.900H12V12H13.800V6.900 12H12V6.900H1.800V12H0z" fill="#5e5e5e"/><path d="M12 6.900h1.800V12H12z" fill="#5e5e5e"/><path d="M1.600 4.100h2.200v.9H1.600zM5.800 4.100H8v.9H5.800zM9.950 4.100h2.200v.9h-2.200z" fill="#fff"/><rect x="3.200" y="8.300" width="3.600" height="3.400" fill="#888" opacity=".18"/><path d="M2.900 8h1v1h-1zM5.900 8h1v1h-1zM2.900 10.900h1v1h-1zM5.900 10.900h1v1h-1z" fill="#333"/><path d="M8.200 11.100h1.700v.7H8.200z" fill="#888"/></svg><span class="c" style="left:161.5px;top:396px;">Hovedlager</span><span class="c" style="left:246px;top:394px;">-</span><span class="c" style="left:317.5px;top:396px;">Orderrad</span><span class="c" style="right:680.5px;top:396px;">−1</span><span class="c" style="right:636.5px;top:396px;">56 kr</span><span class="c" style="right:552.5px;top:396px;">76</span><span class="c" style="right:441.5px;top:396px;">77</span><span class="c" style="right:329px;top:396px;">4 312 kr</span><span class="c" style="left:795.5px;top:394px;">-</span><div class="row" style="top:420.79999999999995px;height:40px"></div><span class="c" style="left:11.5px;top:435px;letter-spacing:-.02px">2023-04-19 11:30</span><svg class="abs" style="left:137.70px;top:435.90px;width:14px;height:12px" viewBox="0 0 14 12"><path d="M0 3.500L6.900 0 13.800 3.500V6.900H12V12H13.800V6.900 12H12V6.900H1.800V12H0z" fill="#5e5e5e"/><path d="M12 6.900h1.800V12H12z" fill="#5e5e5e"/><path d="M1.600 4.100h2.200v.9H1.600zM5.800 4.100H8v.9H5.800zM9.950 4.100h2.200v.9h-2.200z" fill="#fff"/><rect x="3.200" y="8.300" width="3.600" height="3.400" fill="#888" opacity=".18"/><path d="M2.900 8h1v1h-1zM5.900 8h1v1h-1zM2.900 10.900h1v1h-1zM5.900 10.900h1v1h-1z" fill="#333"/><path d="M8.200 11.100h1.700v.7H8.200z" fill="#888"/></svg><span class="c" style="left:161.5px;top:435px;">Hovedlager</span><span class="c" style="left:246px;top:433px;">-</span><span class="c" style="left:317.5px;top:435px;">Orderrad</span><span class="c" style="right:680.5px;top:435px;">−1</span><span class="c" style="right:636.5px;top:435px;">56 kr</span><span class="c" style="right:552.5px;top:435px;">77</span><span class="c" style="right:441.5px;top:435px;">78</span><span class="c" style="right:329px;top:435px;">4 368 kr</span><span class="c" style="left:795.5px;top:433px;">-</span></div><div class="abs" style="left:1454px;top:44.500px;width:3px;height:697px;border-radius:1.500px;background:#a6a6ab"></div></div>
</body></html>
